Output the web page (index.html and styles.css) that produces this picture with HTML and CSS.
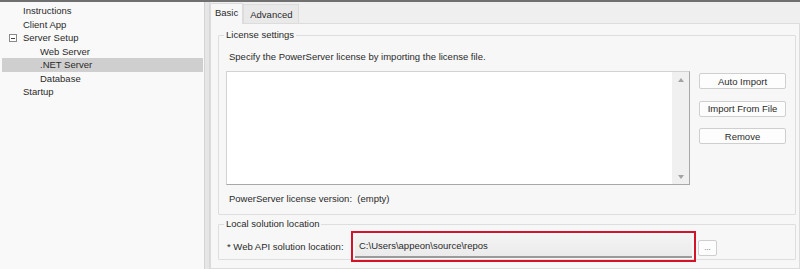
FILE: index.html
```html
<html>
<head>
    <link rel="stylesheet" href="styles.css">
</head>
<body>
    <div class="app">
        <ul class="tree">
            <li class="lvl1">Instructions</li>
            <li class="lvl1">Client App</li>
            <li class="lvl1"><span class="toggle"></span>Server Setup</li>
            <li class="lvl2">Web Server</li>
            <li class="lvl2 selected">.NET Server</li>
            <li class="lvl2">Database</li>
            <li class="lvl1">Startup</li>
        </ul>
        <div class="splitter"></div>
        <div class="main">
            <div class="tabs">
                <div class="tab active">Basic</div>
                <div class="tab">Advanced</div>
            </div>
            <div class="tab-panel">
                <fieldset class="group license">
                    <legend>License settings</legend>
                    <div class="hint">Specify the PowerServer license by importing the license file.</div>
                    <div class="license-row">
                        <div class="license-box">
                            <div class="box-body"></div>
                            <div class="scrollbar">
                                <span class="arrow up"></span>
                                <span class="arrow down"></span>
                            </div>
                        </div>
                        <div class="buttons">
                            <button class="btn">Auto Import</button>
                            <button class="btn">Import From File</button>
                            <button class="btn">Remove</button>
                        </div>
                    </div>
                    <div class="version">PowerServer license version:&nbsp; (empty)</div>
                </fieldset>
                <fieldset class="group location">
                    <legend>Local solution location</legend>
                    <div class="loc-row">
                        <label class="loc-label">* Web API solution location:</label>
                        <div class="path-input">C:\Users\appeon\source\repos</div>
                        <button class="btn browse">...</button>
                    </div>
                </fieldset>
            </div>
        </div>
    </div>
</body>
</html>
```

FILE: styles.css
```css
html, body {margin: 0; padding: 0;}
body {
    font-family: "Liberation Sans", Arial, sans-serif;
    font-size: 9.5px;
    color: #2a2a2a;
    background: #ececec;
    border-top: 2px solid #707070;
    height: 267px;
    overflow: hidden;
}
.app {display: flex; height: 267px;}

.tree {
    list-style: none;
    margin: 0;
    padding: 2px 0 0 2px;
    width: 202px;
    background: #f9f9f9;
    border-right: 1px solid #d4d4d4;
}
.tree li {height: 13.5px; line-height: 13.5px; white-space: nowrap; position: relative;}
.tree .lvl1 {padding-left: 21px;}
.tree .lvl2 {padding-left: 38px;}
.tree .selected {background: #cfcfcf; margin-right: 1px;}
.toggle {
    position: absolute;
    left: 7px;
    top: 3px;
    width: 6px;
    height: 6px;
    border: 1px solid #8a8a8a;
    background: #fff;
}
.toggle:after {
    content: "";
    position: absolute;
    left: 1px;
    top: 2.5px;
    width: 4px;
    height: 1px;
    background: #444;
}

.splitter {width: 4px; background: #e6e6e6; border-right: 1px solid #d8d8d8;}

.main {flex: 1; display: flex; flex-direction: column; background: #efefef;}
.tabs {display: flex; align-items: flex-end; height: 21px; padding-left: 0;}
.tab {
    padding: 0 5px 0 6px;
    height: 18px;
    line-height: 19px;
    background: #e9e9e9;
    border: 1px solid #dcdcdc;
    border-bottom: none;
}
.tab.active {
    height: 20px;
    line-height: 17px;
    background: #f7f7f7;
    padding: 0 4px;
    position: relative;
    top: 1px;
}
.tab-panel {
    flex: 1;
    background: #f7f7f7;
    border: 1px solid #dcdcdc;
    padding: 0 3px 0 7px;
}

.group {
    margin: 0;
    padding: 0 9px 0 7px;
    border: 1px solid #dedede;
    border-radius: 1px;
}
.group legend {padding: 0 2px; margin-left: -2px; line-height: 12px; height: 12px;}
.license {margin-top: 5px; padding-bottom: 9px;}
.hint {margin: 10px 0 0 3px; line-height: 12px;}
.license-row {display: flex; margin-top: 8px; gap: 9px;}
.license-box {
    display: flex;
    width: 462px;
    height: 112px;
    background: #fff;
    border: 1px solid #d2d2d2;
    border-bottom-color: #a8a8a8;
    border-right-color: #a8a8a8;
}
.box-body {flex: 1;}
.scrollbar {
    width: 17px;
    background: #f0f0f0;
    display: flex;
    flex-direction: column;
    justify-content: space-between;
    align-items: center;
    padding: 6px 0 5px;
}
.arrow {width: 0; height: 0; border-left: 3.5px solid transparent; border-right: 3.5px solid transparent;}
.arrow.up {border-bottom: 4px solid #a3a3a3;}
.arrow.down {border-top: 4px solid #a3a3a3;}
.buttons {display: flex; flex-direction: column; gap: 11.5px; padding-top: 2px; width: 87px;}
.btn {
    font-family: inherit;
    font-size: 9.5px;
    color: #2a2a2a;
    height: 16px;
    padding: 0;
    background: #fdfdfd;
    border: 1px solid #cfcfcf;
    border-radius: 2px;
}
.version {margin: 8px 0 0 3px; line-height: 12px;}

.location {margin-top: 3px; padding-bottom: 1px;}
.loc-row {display: flex; align-items: center; margin-top: 5px;}
.loc-label {width: 128px; margin-left: 1px;}
.path-input {
    width: 333px;
    height: 21px;
    line-height: 21px;
    padding-left: 4px;
    background: linear-gradient(#f3f3f3, #ebebeb);
    border-bottom: 2px solid #9a9a9a;
    outline: 2px solid #d3132a;
    outline-offset: 2px;
}
.browse {width: 19px; margin-left: 6px; font-size: 8px; color: #666; margin-top: 2px;}
```
